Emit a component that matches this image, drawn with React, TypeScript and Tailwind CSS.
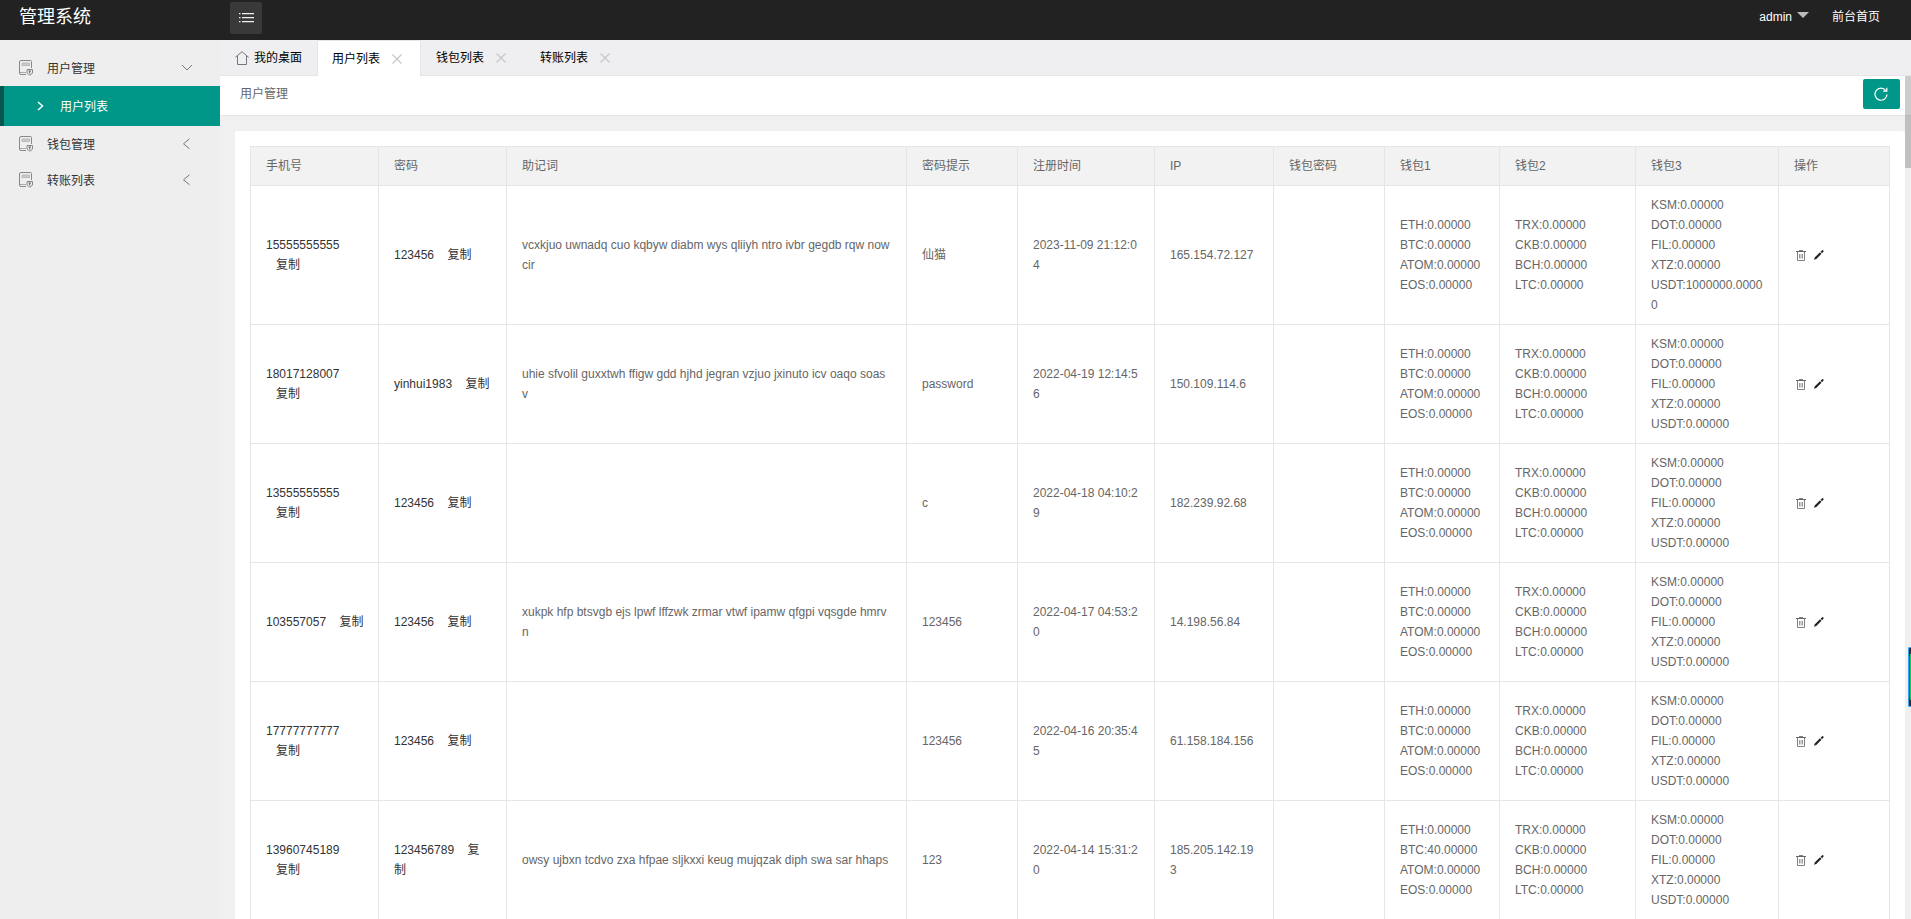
import type { ReactNode } from "react";

type User = {
  phone: string;
  password: string;
  words: string;
  hint: string;
  time: string;
  ip: string;
  btc?: string;
  usdt?: string;
};

const users: User[] = [
  {
    phone: "15555555555",
    password: "123456",
    words: "vcxkjuo uwnadq cuo kqbyw diabm wys qliiyh ntro ivbr gegdb rqw now cir",
    hint: "仙猫",
    time: "2023-11-09 21:12:04",
    ip: "165.154.72.127",
    usdt: "1000000.00000",
  },
  {
    phone: "18017128007",
    password: "yinhui1983",
    words: "uhie sfvolil guxxtwh ffigw gdd hjhd jegran vzjuo jxinuto icv oaqo soas v",
    hint: "password",
    time: "2022-04-19 12:14:56",
    ip: "150.109.114.6",
  },
  {
    phone: "13555555555",
    password: "123456",
    words: "",
    hint: "c",
    time: "2022-04-18 04:10:29",
    ip: "182.239.92.68",
  },
  {
    phone: "103557057",
    password: "123456",
    words: "xukpk hfp btsvgb ejs lpwf lffzwk zrmar vtwf ipamw qfgpi vqsgde hmrvn",
    hint: "123456",
    time: "2022-04-17 04:53:20",
    ip: "14.198.56.84",
  },
  {
    phone: "17777777777",
    password: "123456",
    words: "",
    hint: "123456",
    time: "2022-04-16 20:35:45",
    ip: "61.158.184.156",
  },
  {
    phone: "13960745189",
    password: "123456789",
    words: "owsy ujbxn tcdvo zxa hfpae sljkxxi keug mujqzak diph swa sar hhaps",
    hint: "123",
    time: "2022-04-14 15:31:20",
    ip: "185.205.142.193",
    btc: "40.00000",
  },
];

const headers = [
  "手机号",
  "密码",
  "助记词",
  "密码提示",
  "注册时间",
  "IP",
  "钱包密码",
  "钱包1",
  "钱包2",
  "钱包3",
  "操作",
];

const tabs = ["用户列表", "钱包列表", "转账列表"];

const ZERO = "0.00000";

function BookIcon() {
  return (
    <svg width="15" height="16" viewBox="0 0 15 16" fill="none" stroke="#888" strokeWidth="1">
      <path d="M7 14.500H2a1.500 1.500 0 0 1-1.500-1.500V2A1.500 1.500 0 0 1 2 .5h9.500a1 1 0 0 1 1 1V8" />
      <path d="M1 12.500h6" stroke="#aaa" />
      <path d="M3 3h7.500v2.500H3z" fill="#c8c8c8" stroke="#bbb" />
      <path d="M8 9.500h5.500v2.500c0 1.500-1 2.500-2.700 3-1.800-.5-2.800-1.500-2.800-3z" />
      <path d="M9.500 11h2.500M10.700 11v2.500" stroke="#666" />
    </svg>
  );
}

function HomeIcon() {
  return (
    <svg width="14" height="14" viewBox="0 0 14 14" fill="none" stroke="#777" strokeWidth="1">
      <path d="M.4 6.300 7 .7l6.600 5.600M2.500 5v8.500h9V5" />
    </svg>
  );
}

function CloseIcon() {
  return (
    <svg width="10" height="10" viewBox="0 0 10 10" stroke="#c6c6c6" strokeWidth="1.100">
      <path d="M.5.5l9 9M9.500.5l-9 9" />
    </svg>
  );
}

function ListIcon() {
  return (
    <svg width="15" height="10" viewBox="0 0 15 10" fill="#f0f0f0">
      <path d="M0 0h1.500v1.200H0zM3 0h12v1.200H3zM0 4h1.500v1.200H0zM3 4h12v1.200H3zM0 8h1.500v1.200H0zM3 8h12v1.200H3z" />
    </svg>
  );
}

function RefreshIcon() {
  return (
    <svg width="14" height="14" viewBox="0 0 14 14" fill="none" stroke="#fff" strokeWidth="1.200">
      <path d="M11.800 3.600A6 6 0 1 0 13 7.500" />
      <path d="M12.800.8v3.400H9.200" />
    </svg>
  );
}

function TrashIcon() {
  return (
    <svg width="10" height="11" viewBox="0 0 10 11" fill="none" stroke="#808080" strokeWidth="1">
      <path d="M0 1.500h10" stroke="#666" />
      <path d="M3 .5h4M1.500 2v8.500h7V2" />
      <path d="M3.500 4v4.500M5 4v4.500M6.500 4v4.500" strokeWidth=".8" />
    </svg>
  );
}

function PencilIcon() {
  return (
    <svg width="10" height="10" viewBox="0 0 10 10" fill="#222">
      <path d="M0 9.800l.7-2.300L6 2.300l1.500 1.500L2.300 9zM6.600 1.700 8.200.3a.7.7 0 0 1 .9 0l.4.4a.7.7 0 0 1 0 .9L8.100 3.200z" />
    </svg>
  );
}

function Chevron({ open }: { open?: boolean }) {
  return (
    <svg width="12" height="12" viewBox="0 0 12 12" fill="none" stroke="#777" strokeWidth="1">
      {open ? <path d="M1 3l5 5 5-5" /> : <path d="M8.500 .8l-6 5 6 5" />}
    </svg>
  );
}

function MenuItem({ label, open }: { label: string; open?: boolean }) {
  return (
    <a href="#" className="flex h-9 items-center pl-[19px] pr-[27px] text-[#333]">
      <BookIcon />
      <span className="ml-[13px] flex-1 pt-0.5">{label}</span>
      <Chevron open={open} />
    </a>
  );
}

function Cell({ children, first }: { children?: ReactNode; first?: boolean }) {
  return (
    <td
      className={`border border-[#e6e6e6] py-[9px] pl-[15px] break-all ${
        first ? "pr-[14px]" : "pr-[15px]"
      }`}
    >
      {children}
    </td>
  );
}

function Coin({ name, value = ZERO }: { name: string; value?: string }) {
  return (
    <div>
      {name}:{value}
    </div>
  );
}

function CopyText({ text }: { text: string }) {
  return (
    <span className="text-[#333]">
      {text} <a href="#">{"\u00a0\u00a0\u00a0复制"}</a>
    </span>
  );
}

function UserTable() {
  return (
    <table className="w-full table-fixed border-collapse bg-white text-left leading-5 text-[#666]">
      <colgroup>
        <col className="w-32" />
        <col className="w-32" />
        <col />
        <col className="w-[111px]" />
        <col className="w-[137px]" />
        <col className="w-[119px]" />
        <col className="w-[111px]" />
        <col className="w-[115px]" />
        <col className="w-[136px]" />
        <col className="w-[143px]" />
        <col className="w-[111px]" />
      </colgroup>
      <thead className="bg-[#f2f2f2]">
        <tr>
          {headers.map((h) => (
            <th key={h} className="border border-[#e6e6e6] px-[15px] py-[9px] font-normal">
              {h}
            </th>
          ))}
        </tr>
      </thead>
      <tbody>
        {users.map((u) => (
          <tr key={u.phone}>
            <Cell first>
              <CopyText text={u.phone} />
            </Cell>
            <Cell>
              <CopyText text={u.password} />
            </Cell>
            <Cell>{u.words}</Cell>
            <Cell>{u.hint}</Cell>
            <Cell>{u.time}</Cell>
            <Cell>{u.ip}</Cell>
            <Cell />
            <Cell>
              <Coin name="ETH" />
              <Coin name="BTC" value={u.btc} />
              <Coin name="ATOM" />
              <Coin name="EOS" />
            </Cell>
            <Cell>
              <Coin name="TRX" />
              <Coin name="CKB" />
              <Coin name="BCH" />
              <Coin name="LTC" />
            </Cell>
            <Cell>
              <Coin name="KSM" />
              <Coin name="DOT" />
              <Coin name="FIL" />
              <Coin name="XTZ" />
              <Coin name="USDT" value={u.usdt} />
            </Cell>
            <Cell>
              <div className="flex items-center gap-2 pl-0.5">
                <button type="button" aria-label="删除">
                  <TrashIcon />
                </button>
                <button type="button" aria-label="编辑">
                  <PencilIcon />
                </button>
              </div>
            </Cell>
          </tr>
        ))}
      </tbody>
    </table>
  );
}

export default function App() {
  return (
    <div className="flex h-screen flex-col overflow-hidden bg-[#f0f0f0] font-['Liberation_Sans','Noto_Sans_CJK_SC',sans-serif] text-xs text-[#333]">
      <header className="flex h-10 shrink-0 bg-[#222] text-white">
        <div className="w-[230px] pl-[19px] text-lg leading-[34px]">管理系统</div>
        <button
          type="button"
          aria-label="菜单"
          className="mt-0.5 flex size-8 items-center justify-center rounded-xs bg-[#393939]"
        >
          <ListIcon />
        </button>
        <nav className="ml-auto flex h-[34px] items-center pr-[31px]">
          <a href="#" className="flex items-center">
            admin
            <span className="mt-[-4px] ml-[5px] border-x-6 border-t-6 border-x-transparent border-t-[#bbb]" />
          </a>
          <a href="#" className="ml-[23px]">
            前台首页
          </a>
        </nav>
      </header>

      <div className="flex min-h-0 flex-1">
        <aside className="w-[220px] shrink-0 bg-[#eee] pt-2.5">
          <MenuItem label="用户管理" open />
          <a
            href="#"
            className="flex h-10 items-center border-l-4 border-[#05564e] bg-[#009688] pl-[33px] text-white"
          >
            <svg width="7" height="10" viewBox="0 0 7 10" fill="none" stroke="#fff" strokeWidth="1.500">
              <path d="M1 1l4.500 4L1 9" />
            </svg>
            <span className="ml-4 pt-0.5">用户列表</span>
          </a>
          <MenuItem label="钱包管理" />
          <MenuItem label="转账列表" />
        </aside>

        <div className="flex min-w-0 flex-1 flex-col">
          <div className="flex h-9 shrink-0 bg-[#efeef0] text-black">
            <a
              href="#"
              className="flex w-[97px] items-center gap-[5px] border-b border-[#e6e6e6] pl-[15px]"
            >
              <HomeIcon />
              我的桌面
            </a>
            {tabs.map((t, i) => (
              <div
                key={t}
                className={
                  i === 0
                    ? "flex w-[104px] items-center rounded-t-xs border border-b-0 border-[#e6e6e6] bg-white pl-[14px]"
                    : "flex w-[104px] items-center border-b border-[#e6e6e6] pl-[15px]"
                }
              >
                <a href="#">{t}</a>
                <button type="button" aria-label="关闭" className="ml-3">
                  <CloseIcon />
                </button>
              </div>
            ))}
            <div className="flex-1 border-b border-[#e6e6e6]" />
          </div>

          <main className="relative min-h-0 flex-1 overflow-hidden">
            <div className="flex h-10 items-center justify-between border-b border-[#e6e6e6] bg-white pr-[11px] pb-[3px] pl-5 text-[#666]">
              <span>用户管理</span>
              <button
                type="button"
                aria-label="刷新"
                className="flex h-[30px] w-[37px] items-center justify-center rounded-xs bg-[#009688] pr-0.5"
              >
                <RefreshIcon />
              </button>
            </div>
            <div className="mt-[15px] mr-1.5 ml-[15px] rounded-xs bg-white p-[15px]">
              <UserTable />
            </div>
            {/* scrollbar thumb */}
            <div className="absolute top-0 right-0 h-[92px] w-1.5 bg-black/20" />
            {/* floating side widget */}
            <div className="absolute top-[571px] right-0 flex h-[60px] w-[3px] rounded-l-xs border-y border-l border-[#3aa0f0] bg-[#2b2b3a] shadow-md">
              <div className="my-2 w-px bg-[#5a3fc0]" />
              <div className="my-1.5 w-px bg-[#18c850]" />
            </div>
          </main>
        </div>
      </div>
    </div>
  );
}
